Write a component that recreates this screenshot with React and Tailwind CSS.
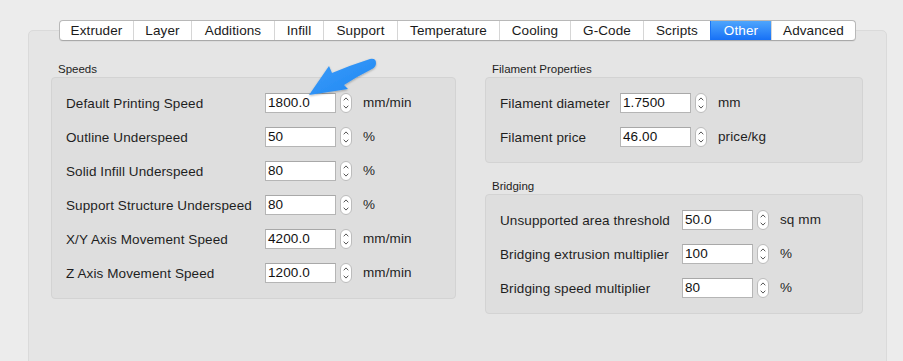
import React from "react";

const tabs = [
  ["Extruder", "w-[73px]"],
  ["Layer", "w-[58px]"],
  ["Additions", "w-[83px]"],
  ["Infill", "w-[49px]"],
  ["Support", "w-[74px]"],
  ["Temperature", "w-[102px]"],
  ["Cooling", "w-[71px]"],
  ["G-Code", "w-[73px]"],
  ["Scripts", "w-[67px]"],
  ["Other", "w-[61px]"],
  ["Advanced", "w-[84px]"],
];

function Stepper() {
  return (
    <div className="w-[12px] h-[20px] rounded-[6px] border border-[#bcbcbc] bg-white flex flex-col items-center justify-between py-[3px]">
      <svg width="6" height="4" viewBox="0 0 6 4">
        <path d="M0.7 3.3 L3 0.9 L5.3 3.3" fill="none" stroke="#555" strokeWidth="1" />
      </svg>
      <svg width="6" height="4" viewBox="0 0 6 4">
        <path d="M0.7 0.7 L3 3.1 L5.3 0.7" fill="none" stroke="#555" strokeWidth="1" />
      </svg>
    </div>
  );
}

function Row({ label, value, unit, labelW }) {
  return (
    <div className="flex items-center h-[20px] text-[13.5px] tracking-[0.1px]">
      <div className={`${labelW} text-[#1e1e1e] leading-[16px] whitespace-nowrap pt-[1px]`}>{label}</div>
      <div className="w-[71px] h-[20px] bg-white border border-[#b5b5b5] border-t-[#a8a8a8] leading-[18px] pl-[2px] text-[#111]">
        {value}
      </div>
      <div className="ml-[4px]">
        <Stepper />
      </div>
      <div className="ml-[11px] text-[#1e1e1e] whitespace-nowrap pt-[1px]">{unit}</div>
    </div>
  );
}

function Group({ title, children, className = "" }) {
  return (
    <div className={`flex flex-col ${className}`}>
      <div className="pl-[7px] text-[11.5px] leading-[14px] text-[#1e1e1e] mb-[1px]">{title}</div>
      <div className="bg-[#dedede] border border-[#d3d3d3] rounded-[4px] pl-[14px] py-[15px] flex flex-col gap-[14px]">
        {children}
      </div>
    </div>
  );
}

export default function App() {
  return (
    <div
      className="relative w-[903px] h-[361px] overflow-hidden bg-[#ececec]"
      style={{ fontFamily: '"Liberation Sans", Arial, sans-serif' }}
    >
      <div className="flex flex-col pt-[20px] px-[28px] pr-[16px]">
        <div className="relative z-10 flex justify-center">
          <div className="flex h-[21px] bg-white border border-[#b8b8b8] border-b-[#a9a9a9] rounded-[4px] overflow-hidden shadow-[0_1px_0_rgba(0,0,0,0.04)]">
            {tabs.map(([t, w], i) => {
              const active = t === "Other";
              return (
                <div
                  key={t}
                  className={`${w} flex items-center justify-center text-[13.5px] tracking-[0.1px] leading-[19px] ${
                    i > 0 ? "border-l border-[#d6d6d6]" : ""
                  } ${
                    active
                      ? "bg-gradient-to-b from-[#4ea5fc] to-[#1670f6] text-white border-l-[#1a74f4]"
                      : "text-[#1a1a1a]"
                  }`}
                >
                  {t}
                </div>
              );
            })}
          </div>
        </div>
        <div className="-mt-[11px] h-[360px] bg-[#e5e5e5] border border-[#dadada] rounded-[5px] pt-[31px] pl-[22px] pr-[23px] flex gap-[29px]">
          <Group title="Speeds" className="w-[405px]">
            <Row label="Default Printing Speed" value="1800.0" unit="mm/min" labelW="w-[199px]" />
            <Row label="Outline Underspeed" value="50" unit="%" labelW="w-[199px]" />
            <Row label="Solid Infill Underspeed" value="80" unit="%" labelW="w-[199px]" />
            <Row label="Support Structure Underspeed" value="80" unit="%" labelW="w-[199px]" />
            <Row label="X/Y Axis Movement Speed" value="4200.0" unit="mm/min" labelW="w-[199px]" />
            <Row label="Z Axis Movement Speed" value="1200.0" unit="mm/min" labelW="w-[199px]" />
          </Group>
          <div className="w-[378px] flex flex-col gap-[16px]">
            <Group title="Filament Properties">
              <Row label="Filament diameter" value="1.7500" unit="mm" labelW="w-[120px]" />
              <Row label="Filament price" value="46.00" unit="price/kg" labelW="w-[120px]" />
            </Group>
            <Group title="Bridging">
              <Row label="Unsupported area threshold" value="50.0" unit="sq mm" labelW="w-[182px]" />
              <Row label="Bridging extrusion multiplier" value="100" unit="%" labelW="w-[182px]" />
              <Row label="Bridging speed multiplier" value="80" unit="%" labelW="w-[182px]" />
            </Group>
          </div>
        </div>
      </div>
      <svg className="absolute left-0 top-0 pointer-events-none" width="903" height="361">
        <defs>
          <filter id="sh" x="-20%" y="-20%" width="140%" height="140%">
            <feDropShadow dx="0" dy="1" stdDeviation="1" floodColor="#000" floodOpacity="0.3" />
          </filter>
          <linearGradient id="ag" x1="0" y1="0" x2="1" y2="1">
            <stop offset="0" stopColor="#3b9dfa" />
            <stop offset="1" stopColor="#1f86f2" />
          </linearGradient>
        </defs>
        <path
          filter="url(#sh)"
          fill="url(#ag)"
          d="M309 95 L329 66 L332 73 Q351 65 370 59 Q376 58 376 63 Q376 67 372 69 Q358 76 344 85 L348 89 Z"
        />
      </svg>
    </div>
  );
}
